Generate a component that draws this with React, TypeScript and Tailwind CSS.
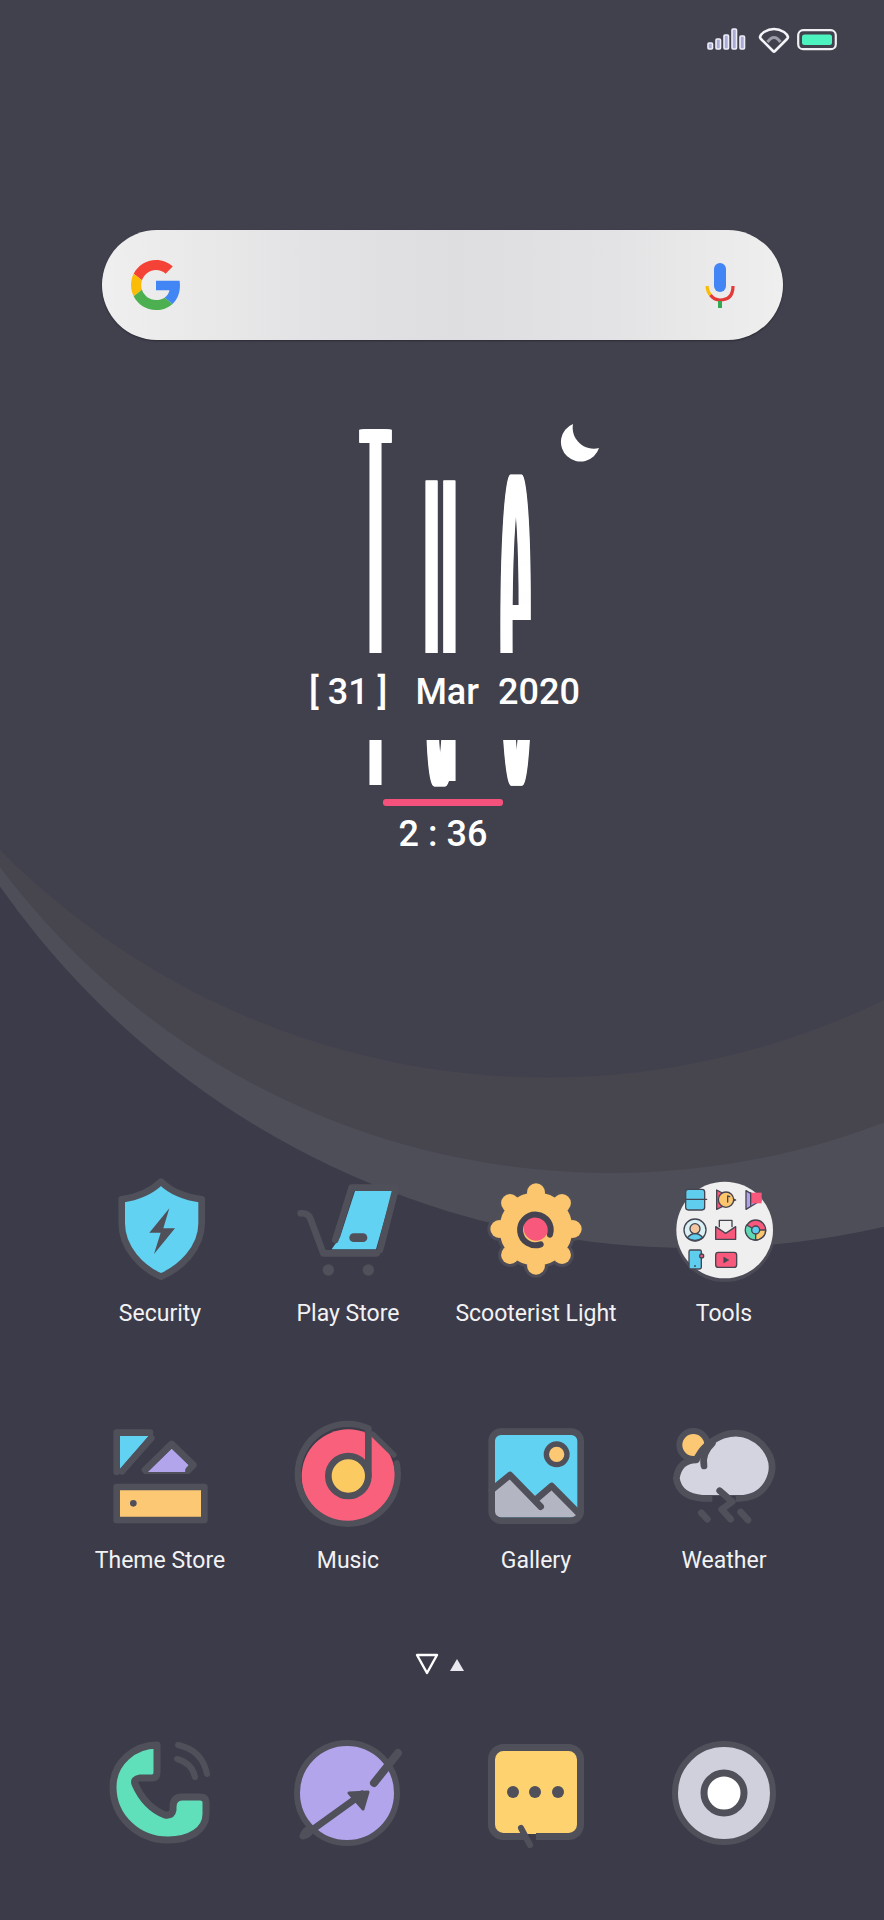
import React from "react";

const S = "#50505b";

function Wallpaper() {
  return (
    <svg className="absolute inset-0 w-[884px] h-[1920px]" viewBox="0 0 884 1920">
      <circle cx="695" cy="399" r="849" fill="#4e4e58" />
      <circle cx="611" cy="410" r="763" fill="#47464f" />
      <circle cx="547" cy="306.500" r="771" fill="#41414e" />
    </svg>
  );
}

function StatusBar() {
  return (
    <div className="relative h-[60px] flex justify-end items-start pt-[27px] pr-[47px] gap-[9px]">
      <svg className="w-[42px] h-[22px] mt-[1px]" viewBox="0 0 42 22">
        {[[1,15,6],[9,11,10],[17,7,14],[25,1,20],[33,8,13]].map(([x, y, h], i) => (
          <rect key={i} x={x} y={y} width="4.500" height={h} rx="1" fill="#a9abd6" stroke="#eeeef8" strokeWidth="1.600" />
        ))}
      </svg>
      <svg className="w-[32px] h-[26px]" viewBox="0 0 32 26">
        <path d="M2 10 Q3 7 6 5 Q16 -1 26 5 Q29 7 30 10 Q30 11 29 12 L17 24 Q16 25 15 24 L3 12 Q2 11 2 10Z" fill="none" stroke="#f4f4f8" strokeWidth="2.600" />
        <path d="M9.500 15 Q16 6 22.500 15" fill="none" stroke="#9c9ca6" strokeWidth="3" />
      </svg>
      <svg className="w-[40px] h-[22px] mt-[2px] ml-[-2px]" viewBox="0 0 40 22">
        <rect x="1.200" y="1.200" width="37.600" height="19" rx="5" fill="none" stroke="#f0f0f4" strokeWidth="2.200" />
        <rect x="5" y="5.500" width="30" height="10.500" rx="2.500" fill="#4df3bf" />
      </svg>
    </div>
  );
}

function SearchBar() {
  return (
    <div className="mt-[170px] ml-[102px] w-[681px] h-[110px] relative rounded-[55px] bg-[linear-gradient(90deg,#efefef_0%,#e3e3e5_30%,#dedee0_52%,#e3e3e5_75%,#efefef_100%)] flex items-center justify-between pl-[29px] pr-[47px] shadow-[0_1px_2px_rgba(0,0,0,0.35)]">
      <svg className="w-[50px] h-[50px]" viewBox="0 0 48 48">
        <path fill="#f44336" d="M24 9.5c3.54 0 6.71 1.22 9.21 3.6l6.85-6.85C35.9 2.38 30.47 0 24 0 14.62 0 6.51 5.38 2.56 13.22l7.98 6.19C12.43 13.72 17.74 9.5 24 9.5z" />
        <path fill="#4285F4" d="M46.98 24.55c0-1.57-.15-3.09-.38-4.55H24v9.02h12.94c-.58 2.96-2.26 5.48-4.78 7.18l7.730 6c4.51-4.18 7.09-10.36 7.09-17.65z" />
        <path fill="#FBBC05" d="M10.53 28.59c-.48-1.45-.76-2.99-.76-4.59s.27-3.14.76-4.59l-7.98-6.19C.92 16.46 0 20.12 0 24c0 3.88.92 7.54 2.56 10.78l7.97-6.19z" />
        <path fill="#4caf50" d="M24 48c6.48 0 11.93-2.13 15.89-5.81l-7.73-6c-2.15 1.45-4.92 2.3-8.16 2.3-6.26 0-11.57-4.22-13.47-9.91l-7.98 6.19C6.51 42.62 14.62 48 24 48z" />
      </svg>
      <svg className="w-[32px] h-[45px]" viewBox="0 0 32 45">
        <rect x="10" y="0" width="12" height="29" rx="6" fill="#4285F4" />
        <path d="M3 23 Q3.500 29 6.500 32" fill="none" stroke="#FBBC05" strokeWidth="3.200" />
        <path d="M6.500 32 Q10 37 16 37 Q29 37 29 23" fill="none" stroke="#e53935" strokeWidth="3.200" />
        <rect x="14" y="38" width="4" height="7" fill="#34A853" />
      </svg>
    </div>
  );
}

const thick = "[text-shadow:-5.5px_0_0_#fff,-5px_0_0_#fff,-4.5px_0_0_#fff,-4px_0_0_#fff,-3.5px_0_0_#fff,-3px_0_0_#fff,-2.5px_0_0_#fff,-2px_0_0_#fff,-1.5px_0_0_#fff,-1px_0_0_#fff,-0.5px_0_0_#fff,0.5px_0_0_#fff,1px_0_0_#fff,1.5px_0_0_#fff,2px_0_0_#fff,2.5px_0_0_#fff,3px_0_0_#fff,3.5px_0_0_#fff,4px_0_0_#fff,4.5px_0_0_#fff,5px_0_0_#fff,5.5px_0_0_#fff]";

function ClockWidget() {
  return (
    <div className="relative mt-[89px] h-[431px] flex flex-col items-center [font-family:Roboto,sans-serif] text-white">
      <div className="absolute left-[359px] top-0 flex items-start leading-none font-thin">
        <span className={`block w-[33px] mt-[330px] text-[40px] text-center origin-[50%_84%] scale-y-[12.5] ${thick}`}>T</span>
        <span className={`block w-[33px] mt-[310px] ml-[32px] text-[50px] text-center origin-[50%_84%] scale-y-[11.38] ${thick}`}>u</span>
        <span className={`block w-[33px] mt-[308px] ml-[42px] text-[46px] text-center origin-[50%_84%] scale-y-[12.35] ${thick}`}>e</span>
      </div>
      <svg className="absolute left-[560px] top-[-5px] w-[39px] h-[39px]" viewBox="0 0 39 39">
        <path d="M13 0 A19.500 19.500 0 1 0 39 24 A21 21 0 0 1 13 0Z" fill="#fff" />
      </svg>
      <div className="relative mt-[224px] w-full h-[89px] bg-[#41414e] flex items-start justify-start pt-[12px] pl-[309px] text-[36px] font-medium leading-[54px] whitespace-pre">
        <span>[ 31 ]</span>
        <span className="ml-[28px]">Mar</span>
        <span className="ml-[19px]">2020</span>
      </div>
      <div className="relative mt-[59px] ml-[2px] w-[120px] h-[7px] rounded-[3px] bg-[#f4527c]" />
      <div className="relative mt-[2px] ml-[2px] text-[36px] font-medium leading-[52px] whitespace-pre">2 : 36</div>
    </div>
  );
}

function Icon({ vb, children }: { vb: string; children: React.ReactNode }) {
  return (
    <svg className="w-[120px] h-[120px]" viewBox={`${vb} 360 360`} strokeLinecap="round" strokeLinejoin="round">
      {children}
    </svg>
  );
}

const Security = () => (
  <Icon vb="30 30">
    <path d="M213 65 C180 97 140 112 95 118 L95 190 C95 265 155 325 213 350 C272 325 335 265 335 190 L335 118 C288 112 245 97 213 65Z" fill="#62d2f2" stroke={S} strokeWidth="20" />
    <path d="M238 145 L178 218 L212 218 L192 282 L255 205 L220 205Z" fill={S} />
  </Icon>
);
const PlayStore = () => (
  <Icon vb="594 30">
    <path d="M795 93 L908 93 L858 268 L725 268 L750 232Z" fill="#62d2f2" />
    <path d="M736 240 L785 83 L918 83 L870 270" fill="none" stroke={S} strokeWidth="20" />
    <path d="M632 160 Q655 158 662 178 L700 280 L860 280" fill="none" stroke={S} strokeWidth="20" />
    <rect x="778" y="220" width="54" height="26" rx="13" fill={S} />
    <circle cx="715" cy="330" r="17" fill={S} />
    <circle cx="835" cy="330" r="17" fill={S} />
  </Icon>
);
function Gear() {
  const lobes = Array.from({ length: 8 }, (_, i) => {
    const a = (i * Math.PI) / 4 - Math.PI / 2;
    return [258 + 110 * Math.cos(a), 207 + 110 * Math.sin(a)];
  });
  return (
    <Icon vb="78 30">
      <g fill={S} stroke={S} strokeWidth="18" opacity="0.8">
        <circle cx="258" cy="207" r="110" />
        {lobes.map(([x, y], i) => <circle key={i} cx={x} cy={y} r="27" />)}
      </g>
      <g fill="#fbc66d">
        <circle cx="258" cy="207" r="110" />
        {lobes.map(([x, y], i) => <circle key={i} cx={x} cy={y} r="27" />)}
      </g>
      <circle cx="258" cy="205" r="37" fill="#f8587c" />
      <path d="M272 253 A46 46 0 1 1 300 224" fill="none" stroke="#44434f" strokeWidth="18" />
    </Icon>
  );
}
const Tools = () => (
  <Icon vb="10 0">
    <circle cx="192" cy="184" r="152" fill="#50505b" opacity="0.75" />
    <circle cx="192" cy="180" r="145" fill="#efefef" />
    <g stroke="#454552" strokeWidth="4">
      <rect x="75" y="58" width="57" height="62" rx="8" fill="#5fcdee" />
      <path d="M75 88 L138 88" />
      <path d="M168 60 L225 90 L168 118Z" fill="#f8587c" />
      <circle cx="196" cy="89" r="23" fill="#fbc66d" />
      <path d="M201 78 L201 96 M201 78 L207 80" fill="none" />
      <path d="M256 62 L256 118 L302 90Z" fill="#b3a0e8" />
      <rect x="270" y="68" width="33" height="32" fill="#f8587c" stroke="none" />
      <path d="M270 68 L270 106" fill="none" />
      <circle cx="103" cy="180" r="33" fill="#d9f1f5" />
      <path d="M80 203 Q103 178 127 203 Q103 220 80 203Z" fill="#5fcdee" />
      <circle cx="103" cy="176" r="15" fill="#f5c7a0" />
      <path d="M176 170 L176 151 L214 151 L214 170" fill="#efefef" />
      <path d="M165 170 L195 190 L225 170 L225 208 L165 208Z" fill="#f8587c" />
      <circle cx="285" cy="180" r="30" fill="#f8587c" />
      <path d="M285 210 A30 30 0 0 1 258 165 L285 180Z" fill="#5fd9b4" />
      <path d="M285 210 A30 30 0 0 0 315 180 L285 180Z" fill="#fbc66d" />
      <circle cx="285" cy="180" r="12" fill="#5fcdee" />
      <rect x="85" y="240" width="37" height="57" rx="5" fill="#5fcdee" />
      <circle cx="123" cy="258" r="6" fill="#f8587c" />
      <circle cx="103" cy="288" r="1" fill="#454552" />
      <rect x="165" y="247" width="63" height="45" rx="8" fill="#f8587c" />
      <path d="M190 262 L204 270 L190 278Z" fill="#454552" strokeWidth="2" />
    </g>
  </Icon>
);
const Theme = () => (
  <Icon vb="30 21">
    <path d="M90 78 L176 78 L90 178Z" fill="#62d2f2" />
    <path d="M80 185 L80 68 L180 68 M184 84 L96 184" fill="none" stroke={S} strokeWidth="20" />
    <path d="M245 115 L297 165 L285 187 L172 187Z" fill="#b3a5ec" />
    <path d="M165 180 L245 102 L310 165 L296 180" fill="none" stroke={S} strokeWidth="20" />
    <path d="M165 189 L296 189" fill="none" stroke={S} strokeWidth="6" />
    <rect x="80" y="231" width="263" height="99" fill="#fdc873" stroke={S} strokeWidth="20" />
    <circle cx="130" cy="280" r="10" fill={S} />
  </Icon>
);
const Music = () => (
  <Icon vb="594 21">
    <circle cx="775" cy="198" r="140" fill="#f9607c" />
    <path d="M835 55 A150 150 0 1 0 920 160" fill="none" stroke={S} strokeWidth="19" />
    <path d="M848 72 L912 135" fill="none" stroke={S} strokeWidth="16" />
    <circle cx="775" cy="198" r="60" fill="#fbcb62" stroke={S} strokeWidth="20" />
    <path d="M835 198 L835 62" fill="none" stroke={S} strokeWidth="20" />
  </Icon>
);
const Gallery = () => (
  <Icon vb="78 21">
    <rect x="125" y="65" width="267" height="267" rx="28" fill="#62d2f2" />
    <path d="M125 245 L180 197 L272 270 L305 230 L385 318 L375 322 L150 322 Q130 322 130 300Z" fill="#b3b5c2" />
    <rect x="125" y="65" width="267" height="267" rx="28" fill="none" stroke={S} strokeWidth="20" />
    <path d="M125 240 L180 195 L272 290 M262 265 L305 228 L388 312" fill="none" stroke={S} strokeWidth="20" />
    <circle cx="320" cy="133" r="31" fill="#fdc873" stroke={S} strokeWidth="16" />
  </Icon>
);
const Weather = () => (
  <Icon vb="645 21">
    <circle cx="733" cy="105" r="42" fill="#fdc873" stroke={S} strokeWidth="18" />
    <path d="M742 150 Q762 100 825 75 Q890 55 940 105 Q990 160 955 220 Q928 265 870 265 L760 265 Q690 260 682 205 Q690 150 742 150Z" fill="#d3d4e0" stroke={S} strokeWidth="20" />
    <path d="M765 168 Q758 130 790 100" fill="none" stroke={S} strokeWidth="20" />
    <rect x="790" y="258" width="70" height="20" fill="#3c3b49" />
    <path d="M812 242 L850 275 L818 298 L845 328 M757 308 L775 328 M875 306 L897 330" fill="none" stroke={S} strokeWidth="20" />
  </Icon>
);

function Dock({ children }: { children: React.ReactNode }) {
  return (
    <svg className="w-[120px] h-[120px]" viewBox="-60 -60 120 120" strokeLinecap="round" strokeLinejoin="round">
      {children}
    </svg>
  );
}
const Phone = () => (
  <Dock>
    <path d="M-3 -47 C-25 -47 -47 -30 -47 -5 C-47 25 -22 48 8 48 C30 48 46 38 46 22 L46 10 Q46 5 40 5 L22 5 Q13 5 13 15 L13 18 Q12 24 5 23 Q-15 15 -25 -8 Q-27 -13 -20 -14 L-8 -14 Q-3 -14 -3 -20Z" fill="#5fe0bb" stroke={S} strokeWidth="7" />
    <path d="M18 -47 Q42 -42 47 -18 M17 -33 Q32 -29 35 -15" fill="none" stroke={S} strokeWidth="6" />
  </Dock>
);
const Planet = () => (
  <Dock>
    <circle cx="-1" cy="1" r="50" fill="#b3a5ec" stroke={S} strokeWidth="6" />
    <path d="M-45 44 Q-42 36 -36 38 L14 2" fill="none" stroke={S} strokeWidth="7" />
    <path d="M-45 44 Q-40 46 -34 36" fill="none" stroke={S} strokeWidth="5" />
    <path d="M20 0 L1 1 L15 17Z" fill={S} stroke={S} strokeWidth="3" />
    <path d="M26 -9 L50 -39" fill="none" stroke={S} strokeWidth="8" />
  </Dock>
);
const Message = () => (
  <Dock>
    <rect x="-44.500" y="-44.500" width="89" height="89" rx="12" fill="#fdd26f" stroke={S} strokeWidth="7" />
    <rect x="-12" y="40" width="12" height="9" fill="#3c3b49" />
    <rect x="-13" y="38" width="13" height="4" fill="#fdd26f" />
    <path d="M-15 36 L-6 53" fill="none" stroke={S} strokeWidth="6" />
    <circle cx="-23" cy="0" r="6" fill={S} />
    <circle cx="-1" cy="0" r="6" fill={S} />
    <circle cx="22" cy="0" r="6" fill={S} />
  </Dock>
);
const Camera = () => (
  <Dock>
    <circle cx="0" cy="1" r="49" fill="#cfd0dc" stroke={S} strokeWidth="6" />
    <circle cx="0" cy="1" r="20" fill="#fff" stroke={S} strokeWidth="7" />
  </Dock>
);

function App() {
  const rows: [string, React.ReactNode][] = [
    ["Security", <Security />],
    ["Play Store", <PlayStore />],
    ["Scooterist Light", <Gear />],
    ["Tools", <Tools />],
    ["Theme Store", <Theme />],
    ["Music", <Music />],
    ["Gallery", <Gallery />],
    ["Weather", <Weather />],
  ];
  return (
    <div className="relative w-[884px] h-[1920px] overflow-hidden bg-[#3c3b49] [font-family:Roboto,sans-serif]">
      <Wallpaper />
      <div className="relative flex flex-col">
        <StatusBar />
        <SearchBar />
        <ClockWidget />
        <div className="mt-[310px] px-[66px] grid grid-cols-4 gap-y-[89px]">
          {rows.map(([label, icon]) => (
            <div key={label} className="flex flex-col items-center">
              {icon}
              <span className="mt-[10px] text-[23px] leading-[28px] text-[#f2f2f4] whitespace-nowrap">{label}</span>
            </div>
          ))}
        </div>
        <div className="mt-[79px] h-[20px] flex justify-center items-center gap-[11px] ml-[-5px]">
          <svg className="w-[24px] h-[22px]" viewBox="0 0 24 22">
            <path d="M2 2 L22 2 L12 20Z" fill="none" stroke="#fff" strokeWidth="2.400" strokeLinejoin="round" />
          </svg>
          <svg className="w-[14px] h-[12px] mt-[1px]" viewBox="0 0 14 12">
            <path d="M7 0 L14 12 L0 12Z" fill="#e8e8ee" />
          </svg>
        </div>
        <div className="mt-[58px] px-[66px] grid grid-cols-4 justify-items-center">
          <Phone />
          <Planet />
          <Message />
          <Camera />
        </div>
      </div>
    </div>
  );
}

export default App;
